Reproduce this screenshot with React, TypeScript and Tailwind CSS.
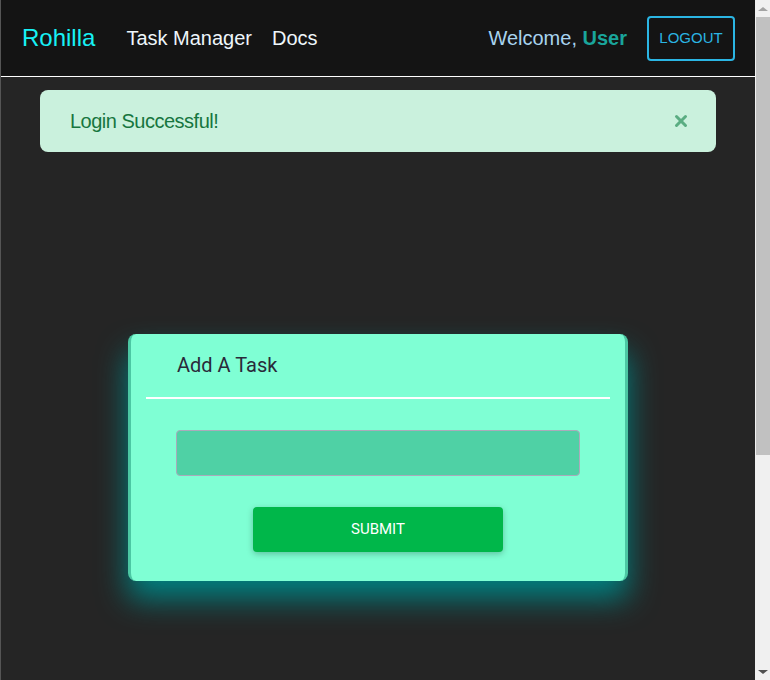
import { X } from 'lucide-react'

function Scrollbar() {
  return (
    <div className="w-[15px] h-[680px] bg-[#f0f0f0] flex flex-col items-center">
      <div className="h-[17px] flex items-center justify-center">
        <div className="w-0 h-0 border-x-[5px] border-x-transparent border-b-[4px] border-b-[#a3a3a3]" />
      </div>
      <div className="w-[14px] h-[438px] bg-[#c1c1c1] ml-[1px]" />
      <div className="flex-1" />
      <div className="h-[17px] flex items-center justify-center">
        <div className="w-0 h-0 border-x-[5px] border-x-transparent border-t-[4px] border-t-[#505050]" />
      </div>
    </div>
  )
}

export default function App() {
  return (
    <div className="h-[680px] overflow-hidden flex font-['Liberation_Sans',Arial,sans-serif]">
      <div className="w-[755px] min-h-[1000px] bg-[#252525] border-l border-[#555]">
        <nav className="h-[77px] bg-[#141414] border-b border-white flex items-center pl-[21px] pr-[20px]">
          <span className="text-[24px] text-[#17f1f5]">Rohilla</span>
          <span className="ml-[31px] text-[20px] text-[#eef6fb]">Task Manager</span>
          <span className="ml-[20px] text-[20px] text-[#eef6fb]">Docs</span>
          <div className="ml-auto flex items-center">
            <span className="text-[20px] text-[#a8d3ee]">
              Welcome, <span className="font-bold text-[#1aa59b]">User</span>
            </span>
            <button className="ml-[20px] w-[88px] h-[45px] border-2 border-[#2bb5e3] rounded-[4px] text-[15px] text-[#2bb5e3]">
              LOGOUT
            </button>
          </div>
        </nav>

        <div className="px-[39px] pt-[13px]">
          <div className="h-[62px] bg-[#caf1dd] rounded-[8px] flex items-center pl-[30px] pr-[26px]">
            <span className="text-[20px] text-[#17763f] tracking-[-0.5px]">Login Successful!</span>
            <X className="ml-auto w-[18px] h-[18px] text-[#5aad82]" strokeWidth={4} />
          </div>
        </div>

        <div className="pl-[127px] pt-[182px]">
          <div className="w-[500px] h-[247px] bg-[#7fffd4] rounded-[8px] border-x-[3px] border-[#4cc7a3] shadow-[0_18px_30px_rgba(0,128,128,1)] px-[15px] font-['Roboto',sans-serif]">
            <div className="h-[65px] flex items-end pb-[17px] pl-[31px] border-b-2 border-white">
              <span className="text-[20px] text-[#2a2a3a]">Add A Task</span>
            </div>
            <div className="px-[30px] pt-[31px]">
              <div className="h-[46px] bg-[#4fd1a5] border border-[#aab] rounded-[4px]" />
            </div>
            <div className="flex justify-center pt-[31px]">
              <button className="w-[250px] h-[45px] bg-[#00b74a] rounded-[4px] text-white text-[15px] shadow-[0_2px_6px_rgba(0,0,0,0.25)]">
                SUBMIT
              </button>
            </div>
          </div>
        </div>
      </div>
      <Scrollbar />
    </div>
  )
}
